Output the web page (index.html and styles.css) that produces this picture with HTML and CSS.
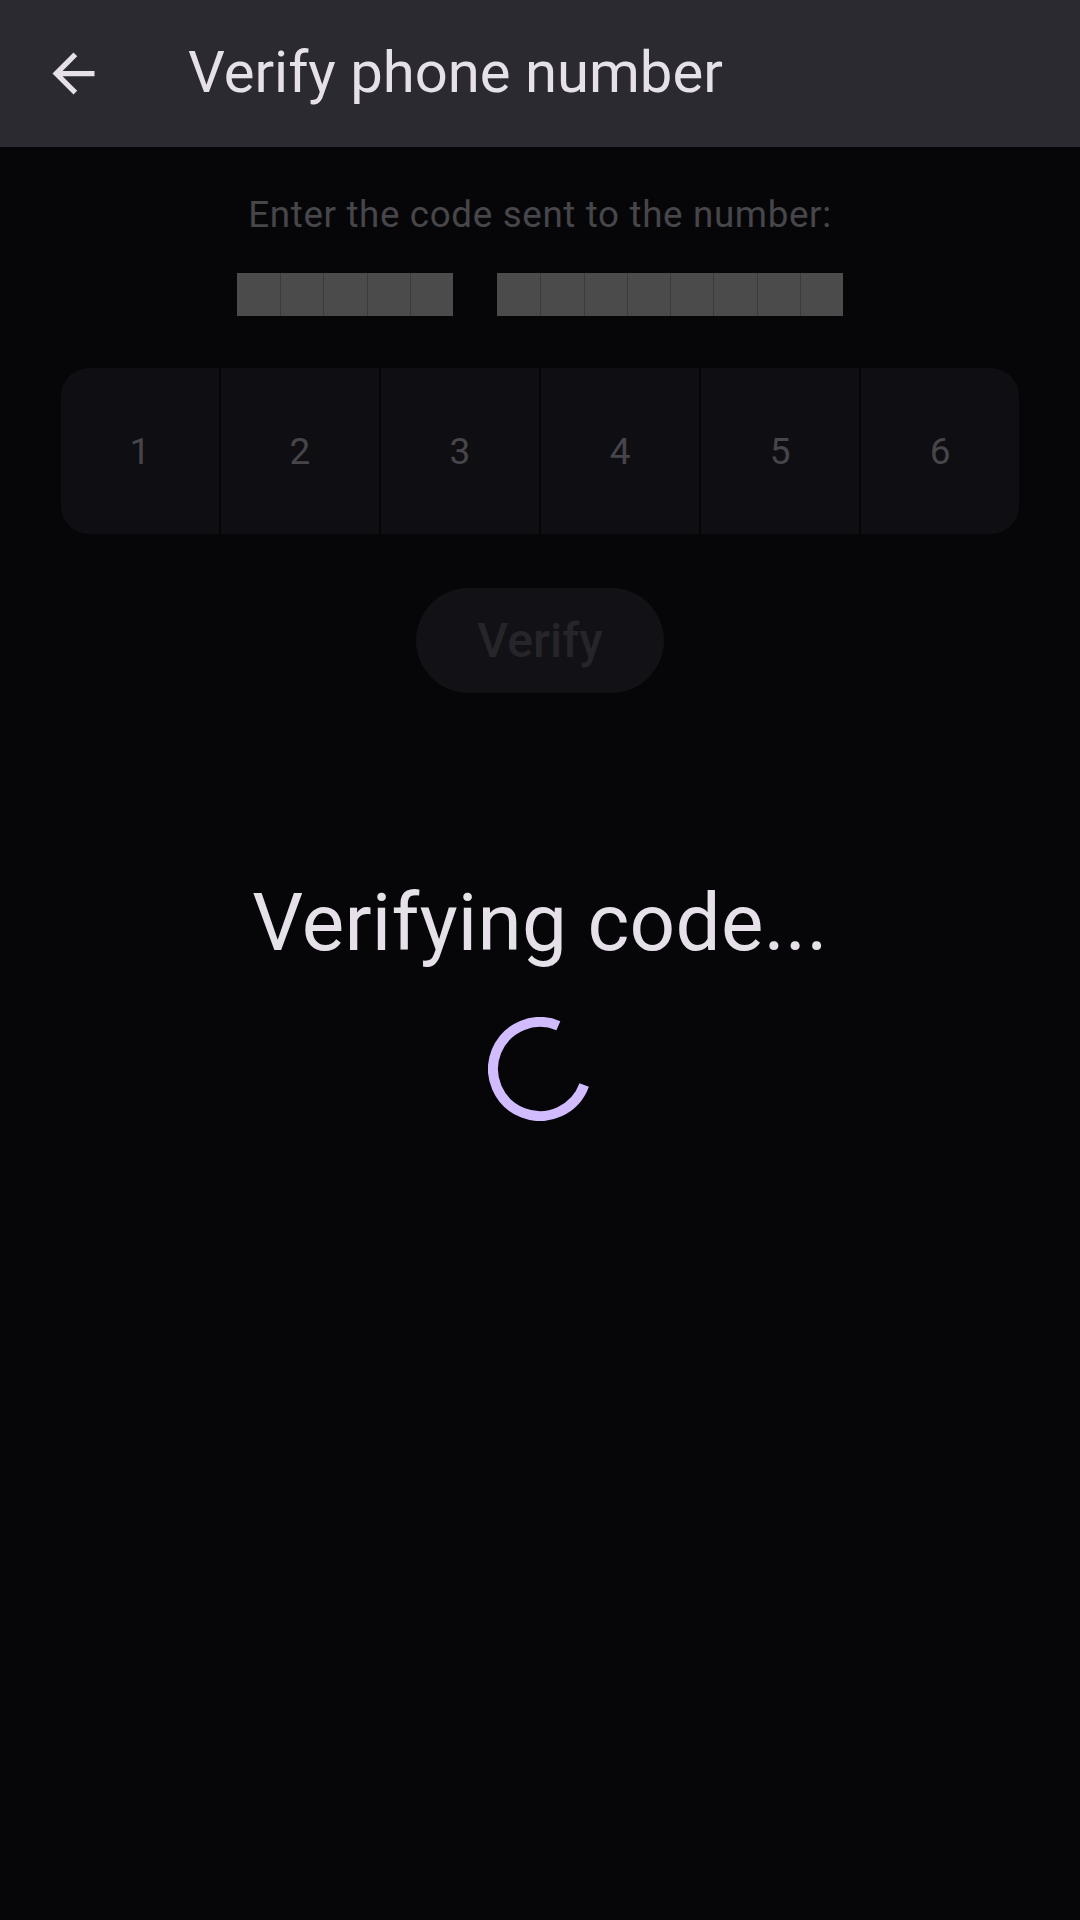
FILE: index.html
```html
<!DOCTYPE html>
<html lang="en">
<head>
<meta charset="utf-8">
<title>Verify phone number</title>
<link rel="stylesheet" href="styles.css">
</head>
<body>
<header class="topbar">
  <svg class="back" viewBox="0 0 24 24" width="63" height="63" aria-label="Back">
    <path d="M20 11H7.83l5.59-5.59L12 4l-8 8 8 8 1.41-1.41L7.83 13H20v-2z" fill="#e6e1e9"/>
  </svg>
  <h1 class="title">Verify phone number</h1>
</header>
<main class="content">
  <p class="subtitle">Enter the code sent to the number:</p>
  <div class="redacted">
    <div class="group">
      <span class="blk"></span><span class="blk"></span><span class="blk"></span><span class="blk"></span><span class="blk"></span>
    </div>
    <div class="group">
      <span class="blk"></span><span class="blk"></span><span class="blk"></span><span class="blk"></span><span class="blk"></span><span class="blk"></span><span class="blk"></span><span class="blk"></span>
    </div>
  </div>
  <div class="code">
    <div class="cell">1</div>
    <div class="cell">2</div>
    <div class="cell">3</div>
    <div class="cell">4</div>
    <div class="cell">5</div>
    <div class="cell">6</div>
  </div>
  <button class="verify" disabled>Verify</button>
  <div class="status">Verifying code...</div>
  <svg class="spinner" width="104" height="104" viewBox="0 0 104 104" aria-hidden="true">
    <path d="M96.17 68.07 A47 47 0 1 1 70.36 8.74" fill="none" stroke="#d0bcff" stroke-width="10" stroke-linecap="butt"/>
  </svg>
</main>
</body>
</html>
```
FILE: styles.css
```css
html, body {
  margin: 0;
  padding: 0;
}
body {
  background: #060609;
  font-family: Roboto, "Noto Sans", "Liberation Sans", sans-serif;
  width: 1080px;
  min-height: 1920px;
}
.topbar {
  height: 147px;
  background: #2b2a31;
  display: flex;
  align-items: center;
  padding-left: 42px;
  box-sizing: border-box;
}
.back {
  display: block;
  flex: none;
}
.title {
  margin: 0 0 3px 83px;
  font-size: 58px;
  font-weight: 400;
  line-height: 68px;
  color: #e6e1e9;
  letter-spacing: 0;
}
.content {
  display: flex;
  flex-direction: column;
  align-items: center;
}
.subtitle {
  margin: 46px 0 0;
  font-size: 36.75px;
  line-height: 44px;
  color: #47464a;
  letter-spacing: 0.65px;
}
.redacted {
  margin-top: 36px;
  display: flex;
  gap: 44px;
}
.group {
  display: flex;
}
.blk {
  width: 43.25px;
  height: 43px;
  background: #4b4b4c;
  box-sizing: border-box;
}
.blk + .blk {
  border-left: 1px solid #3b3b3c;
}
.code {
  margin-top: 52px;
  width: 958px;
  height: 166px;
  display: flex;
  gap: 2.5px;
  border-radius: 28px;
  overflow: hidden;
}
.cell {
  flex: 1;
  background: #0f0e13;
  display: flex;
  align-items: center;
  justify-content: center;
  font-size: 37px;
  color: #46454a;
}
.verify {
  margin-top: 54px;
  width: 248px;
  height: 105px;
  border: none;
  border-radius: 53px;
  background: #121115;
  color: #262529;
  font-family: Roboto, "Noto Sans", "Liberation Sans", sans-serif;
  font-size: 48px;
  font-weight: 500;
  line-height: 105px;
  padding: 0;
}
.status {
  margin-top: 182px;
  font-size: 80px;
  line-height: 96px;
  color: #e6e1e9;
  letter-spacing: 0.3px;
}
.spinner {
  display: block;
  margin-top: 46px;
}
```
